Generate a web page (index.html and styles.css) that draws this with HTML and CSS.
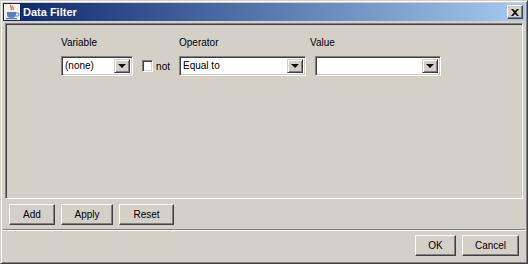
FILE: index.html
```html
<!DOCTYPE html>
<html lang="en">
<head>
    <meta charset="UTF-8">
    <title>Data Filter</title>
    <link rel="stylesheet" href="styles.css">
</head>
<body>
    <div class="window">
        <div class="titlebar">
            <svg class="app-icon" width="16" height="16" viewBox="0 0 16 16">
                <rect x="0" y="0" width="16" height="16" fill="#f4f2ec"/>
                <path d="M7 1c-2 2 2 3 0 5M9 2c-1.5 1.5 1.5 2.5 0 4" stroke="#e0602a" stroke-width="1.2" fill="none"/>
                <path d="M3 8h9v3c0 2-2 3-4.5 3S3 13 3 11z" fill="#5a7fb8"/>
                <path d="M12 9h1.5a1.5 1.5 0 0 1 0 3H12" stroke="#5a7fb8" fill="none"/>
                <rect x="2" y="14" width="11" height="1.2" fill="#5a7fb8"/>
            </svg>
            <span class="title">Data Filter</span>
            <span class="close-btn">
                <svg width="8" height="7" viewBox="0 0 8 7"><path d="M0 0h2l2 2 2-2h2L5 3.5 8 7H6L4 5 2 7H0l3-3.5z" fill="#000"/></svg>
            </span>
        </div>
        <div class="content">
            <div class="filter-panel">
                <div class="filter-grid">
                    <label class="field-label">Variable</label>
                    <span></span>
                    <label class="field-label">Operator</label>
                    <label class="field-label label-value">Value</label>

                    <div class="combo">
                        <span class="combo-text">(none)</span>
                        <span class="combo-arrow"></span>
                    </div>
                    <div class="not-box">
                        <span class="checkbox"></span>
                        <span>not</span>
                    </div>
                    <div class="combo">
                        <span class="combo-text">Equal to</span>
                        <span class="combo-arrow"></span>
                    </div>
                    <div class="combo">
                        <span class="combo-text"></span>
                        <span class="combo-arrow"></span>
                    </div>
                </div>
            </div>
            <div class="actions">
                <button class="btn btn-add">Add</button>
                <button class="btn btn-apply">Apply</button>
                <button class="btn btn-reset">Reset</button>
            </div>
        </div>
        <div class="footer">
            <button class="btn btn-ok">OK</button>
            <button class="btn btn-cancel">Cancel</button>
        </div>
    </div>
</body>
</html>
```

FILE: styles.css
```css
body {
    margin: 0;
    font-family: "Liberation Sans", Arial, sans-serif;
    font-size: 10px;
    color: #000;
    background-color: #d4d0c8;
}
.window {
    box-sizing: border-box;
    width: 528px;
    height: 264px;
    background-color: #d4d0c8;
    border-top: 1px solid #d4d0c8;
    border-left: 1px solid #d4d0c8;
    border-right: 1px solid #404040;
    border-bottom: 1px solid #404040;
    box-shadow: inset 1px 1px #fff, inset -1px -1px #808080;
    padding: 2px;
    display: flex;
    flex-direction: column;
}
.titlebar {
    height: 18px;
    display: flex;
    align-items: center;
    padding: 0 2px 0 1px;
    background: linear-gradient(to right, #0a246a, #a6caf0);
    color: #fff;
}
.app-icon {
    flex: none;
}
.title {
    font-size: 11px;
    font-weight: bold;
    margin-left: 3px;
    flex: 1;
}
.close-btn {
    box-sizing: border-box;
    width: 16px;
    height: 14px;
    display: flex;
    align-items: center;
    justify-content: center;
    background-color: #d4d0c8;
    border: 1px solid;
    border-color: #fff #404040 #404040 #fff;
    box-shadow: inset -1px -1px #808080;
}
.content {
    margin-top: 2px;
    padding: 0 1px 4px;
    border-bottom: 1px solid #808080;
    box-shadow: 0 1px #fff;
}
.filter-panel {
    box-sizing: border-box;
    height: 176px;
    margin: 0 1px;
    border: 1px solid;
    border-color: #808080 #fff #fff #808080;
    box-shadow: inset 1px 1px #404040;
    padding: 12px 0 0 55px;
}
.filter-grid {
    display: grid;
    grid-template-columns: 72px 28px 127px 126px;
    justify-content: start;
    column-gap: 9px;
    row-gap: 6px;
    align-items: center;
}
.field-label {
    line-height: 14px;
}
.label-value {
    margin-left: -5px;
}
.combo {
    box-sizing: border-box;
    height: 20px;
    display: flex;
    background-color: #fff;
    border: 1px solid;
    border-color: #808080 #fff #fff #808080;
    box-shadow: inset 1px 1px #404040, inset -1px -1px #d4d0c8;
    padding: 2px;
}
.combo-text {
    flex: 1;
    line-height: 14px;
    padding-left: 1px;
}
.combo-arrow {
    box-sizing: border-box;
    width: 16px;
    height: 14px;
    position: relative;
    background-color: #d4d0c8;
    border: 1px solid;
    border-color: #d4d0c8 #404040 #404040 #d4d0c8;
    box-shadow: inset 1px 1px #fff, inset -1px -1px #808080;
}
.combo-arrow::after {
    content: "";
    position: absolute;
    left: 3px;
    top: 4px;
    border-left: 4px solid transparent;
    border-right: 4px solid transparent;
    border-top: 4px solid #000;
}
.not-box {
    display: flex;
    align-items: center;
    gap: 3px;
}
.checkbox {
    box-sizing: border-box;
    width: 12px;
    height: 12px;
    background-color: #fff;
    border: 1px solid;
    border-color: #808080 #fff #fff #808080;
    box-shadow: inset 1px 1px #404040, inset -1px -1px #d4d0c8;
}
.actions {
    display: flex;
    gap: 6px;
    padding: 5px 0 0 5px;
}
.btn {
    box-sizing: border-box;
    height: 21px;
    font-family: inherit;
    font-size: 10px;
    color: #000;
    background-color: #d4d0c8;
    border: 1px solid;
    border-color: #fff #404040 #404040 #fff;
    box-shadow: inset -1px -1px #808080;
    padding: 0;
}
.btn-add {
    width: 46px;
}
.btn-apply {
    width: 52px;
}
.btn-reset {
    width: 55px;
}
.footer {
    display: flex;
    justify-content: flex-end;
    gap: 6px;
    padding: 5px 6px 0 0;
}
.btn-ok {
    width: 41px;
}
.btn-cancel {
    width: 57px;
}
```
